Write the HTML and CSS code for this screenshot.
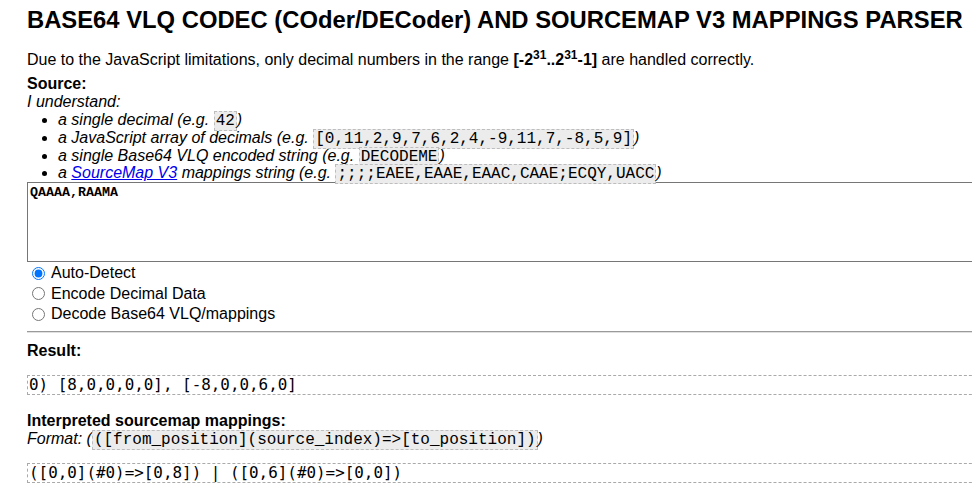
FILE: index.html
```html
<!DOCTYPE html>
<html>
<head>
<meta charset="utf-8">
<title>Base64 VLQ Codec</title>
<link rel="stylesheet" href="styles.css">
</head>
<body>
<div class="page">
  <h1 class="title">BASE64 VLQ CODEC (COder/DECoder) AND SOURCEMAP V3 MAPPINGS PARSER</h1>
  <p class="note">Due to the JavaScript limitations, only decimal numbers in the range <b>[-2<sup>31</sup>..2<sup>31</sup>-1]</b> are handled correctly.</p>
  <div class="source">
    <div class="label">Source:</div>
    <div class="intro">I understand:</div>
    <ul class="kinds">
      <li>a single decimal (e.g. <code class="ex">42</code>)</li>
      <li>a JavaScript array of decimals (e.g. <code class="ex">[0,11,2,9,7,6,2,4,-9,11,7,-8,5,9]</code>)</li>
      <li>a single Base64 VLQ encoded string (e.g. <code class="ex">DECODEME</code>)</li>
      <li>a <a href="#" class="link">SourceMap V3</a> mappings string (e.g. <code class="ex">;;;;EAEE,EAAE,EAAC,CAAE;ECQY,UACC</code>)</li>
    </ul>
    <textarea class="input">QAAAA,RAAMA</textarea>
    <div class="modes">
      <label class="mode"><input type="radio" name="mode" checked> Auto-Detect</label>
      <label class="mode"><input type="radio" name="mode"> Encode Decimal Data</label>
      <label class="mode"><input type="radio" name="mode"> Decode Base64 VLQ/mappings</label>
    </div>
  </div>
  <hr class="sep">
  <div class="section-title result-title">Result:</div>
  <div class="box result-box">0) [8,0,0,0,0], [-8,0,0,6,0]</div>
  <div class="section-title map-title">Interpreted sourcemap mappings:</div>
  <div class="format"><i>Format:</i> <i>(</i><code class="ex">([from_position](source_index)=&gt;[to_position])</code><i>)</i></div>
  <div class="box map-box">([0,0](#0)=&gt;[0,8]) | ([0,6](#0)=&gt;[0,0])</div>
</div>
</body>
</html>
```

FILE: styles.css
```css
html {
  overflow: hidden;
}
body {
  margin: 0;
  background: #fff;
  color: #000;
  font-family: "Liberation Sans", Arial, sans-serif;
  font-size: 16px;
}
.page {
  width: 1000px;
  padding: 0 0 0 27px;
}
.title {
  font-size: 23.8px;
  font-weight: bold;
  line-height: 28px;
  margin: 6px 0 0;
}
.note {
  margin: 17px 0 0;
  line-height: 18px;
}
.note sup {
  font-size: 12px;
  line-height: 0;
}
.source {
  margin-top: 6px;
}
.label {
  font-weight: bold;
  line-height: 18px;
}
.intro {
  font-style: italic;
  line-height: 18px;
}
.kinds {
  margin: 0;
  padding-left: 31px;
  font-style: italic;
  line-height: 17.8px;
}
.kinds li {
  height: 17.8px;
}
.ex {
  font-family: "Liberation Mono", "Courier New", monospace;
  font-style: normal;
  font-size: 16px;
  line-height: 1;
  background: #ececec;
  border: 1px dashed #bdbdbd;
  padding: 0 1px;
}
.link {
  color: #0000ee;
  text-decoration: underline;
}
.input {
  display: block;
  box-sizing: border-box;
  width: 1000px;
  height: 80px;
  margin: 0;
  padding: 2px;
  border: 1px solid #767676;
  font-family: "Liberation Mono", "Courier New", monospace;
  font-size: 13.33px;
  font-weight: bold;
  resize: none;
}
.modes {
  display: flex;
  flex-direction: column;
  margin-top: 1px;
}
.mode {
  display: flex;
  align-items: center;
  height: 20.5px;
  line-height: 18px;
}
.mode input {
  margin: 0 6px 0 5px;
  width: 13px;
  height: 13px;
}
.sep {
  margin: 6px 0 0;
  border: 0;
  border-top: 1px solid #9a9a9a;
  border-bottom: 1px solid #e0e0e0;
}
.section-title {
  font-weight: bold;
  line-height: 18px;
}
.result-title {
  margin-top: 9px;
}
.box {
  font-family: "DejaVu Sans Mono", "Liberation Mono", monospace;
  font-size: 15.9px;
  line-height: 16px;
  border: 1px dashed #aaa;
  padding: 1px 1px;
  white-space: pre;
}
.result-box {
  margin-top: 15px;
}
.map-title {
  margin-top: 17px;
}
.format {
  line-height: 18px;
}
.map-box {
  margin-top: 15px;
}
```
